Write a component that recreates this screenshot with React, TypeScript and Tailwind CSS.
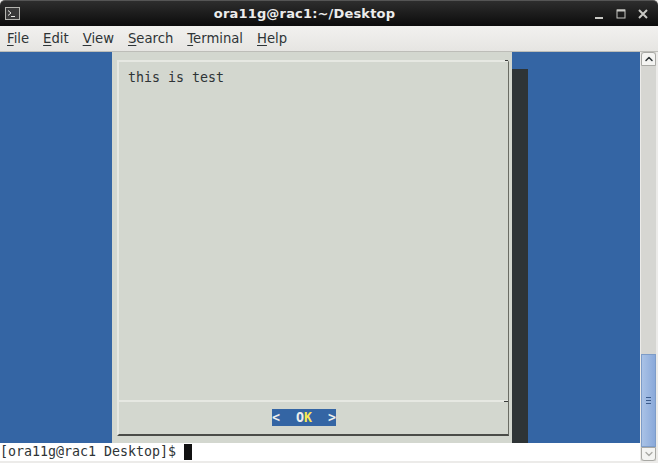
import { ChevronUp, ChevronDown } from "lucide-react";

const menus = [
  { key: "F", rest: "ile" },
  { key: "E", rest: "dit" },
  { key: "V", rest: "iew" },
  { key: "S", rest: "earch" },
  { key: "T", rest: "erminal" },
  { key: "H", rest: "elp" },
];

export default function App() {
  return (
    <div className="flex h-[463px] w-[658px] flex-col overflow-hidden bg-[#ecebe9]">
      {/* Title bar */}
      <div className="flex h-[26px] shrink-0 items-center rounded-t-[5px] border-t border-[#555] bg-gradient-to-b from-[#2e2e2e] to-[#0c0c0c] pl-[5px] pr-[10px]">
        <svg width="15" height="13" viewBox="0 0 15 13" className="shrink-0">
          <rect x="0.5" y="0.5" width="14" height="12" fill="#3a3a3a" stroke="#b5b5b0" />
          <path d="M3 3.5 L6 6 L3 8.5" fill="none" stroke="#e8e8e4" strokeWidth="1" />
          <path d="M6 9.5 H10" stroke="#e8e8e4" strokeWidth="1" />
        </svg>
        <div className="mr-[5px] flex-1 text-center font-['DejaVu_Sans',sans-serif] text-[13px] font-bold tracking-[0.17px] text-[#ececec]">
          ora11g@rac1:~/Desktop
        </div>
        <div className="flex items-center gap-[12px]">
          <svg width="10" height="12" viewBox="0 0 10 12">
            <path d="M1 10 H9" stroke="#c8c8c4" strokeWidth="2" />
          </svg>
          <svg width="10" height="12" viewBox="0 0 10 12">
            <rect x="1" y="2" width="8" height="8" fill="none" stroke="#c8c8c4" />
            <path d="M1 2.5 H9" stroke="#c8c8c4" strokeWidth="2" />
          </svg>
          <svg width="10" height="12" viewBox="0 0 10 12">
            <path d="M1 2 L9 10 M9 2 L1 10" stroke="#c8c8c4" strokeWidth="2" />
          </svg>
        </div>
      </div>

      {/* Menu bar */}
      <div className="flex h-[26px] shrink-0 items-center gap-[14px] border-b border-[#bdbdb8] bg-gradient-to-b from-[#f2f1ef] to-[#e6e5e2] pl-[7px] font-['DejaVu_Sans',sans-serif] text-[13.2px] text-[#2e3436]">
        {menus.map((m) => (
          <span key={m.key}>
            <span className="underline underline-offset-2">{m.key}</span>
            {m.rest}
          </span>
        ))}
      </div>

      <div className="mb-[2px] flex min-h-0 flex-1">
        {/* Terminal */}
        <div className="flex min-w-0 flex-1 flex-col bg-white">
          <div className="flex h-[391px] shrink-0 bg-[#3465a4]">
            <div className="w-[112px] shrink-0" />
            <div className="w-[400px] shrink-0 bg-[#d3d7cf] pb-[7px] pl-[5px] pr-[3px] pt-[8px]">
              <div className="relative flex h-full flex-col border-b-2 border-l-2 border-r border-t-2 border-b-[#4a4c48] border-l-[#e6e8e2] border-r-[#6a6c64] border-t-[#e6e8e2]">
                <div className="absolute -top-[2px] right-0 h-px w-[3px] bg-[#3a3c3a]" />
                <div className="flex-1 pl-[9px] pt-[7px] font-['DejaVu_Sans_Mono',monospace] text-[13.3px] leading-[17px] text-[#2e3436]">
                  this is test
                </div>
                <div className="relative flex h-[34px] shrink-0 items-center justify-center border-t-2 border-[#e6e8e2] pb-[1px] pr-[19px]">
                  <div className="absolute -top-[1px] right-0 h-px w-[4px] bg-[#3a3c3a]" />
                  <div className="whitespace-pre bg-[#3465a4] font-['DejaVu_Sans_Mono',monospace] text-[13.3px] font-bold leading-[17px] text-[#eeeeec]">
                    {"<  O"}
                    <span className="text-[#fce94f]">K</span>
                    {"  >"}
                  </div>
                </div>
              </div>
            </div>
            <div className="flex w-[16px] shrink-0 flex-col pt-[17px]">
              <div className="flex-1 bg-[#2e3436]" />
            </div>
            <div className="flex-1" />
          </div>
          <div className="flex h-[18px] items-center whitespace-pre font-['DejaVu_Sans_Mono',monospace] text-[13.3px] leading-[18px] text-[#2e3436]">
            <span>[ora11g@rac1 Desktop]$ </span>
            <span className="h-[16px] w-[8px] bg-[#111]" />
          </div>
        </div>

        {/* Scrollbar */}
        <div className="flex w-[18px] shrink-0 flex-col bg-[#ecebe9] pl-[1px] pr-[2px]">
          <div className="flex flex-1 flex-col bg-[#d6d6d2]">
            <div className="flex h-[14px] shrink-0 items-center justify-center rounded-t-[3px] border border-[#a8a8a4] bg-[#f4f4f2]">
              <ChevronUp size={12} strokeWidth={3} className="text-[#2e3436]" />
            </div>
            <div className="flex-1" />
            <div className="flex h-[93px] shrink-0 flex-col items-center justify-center gap-[2px] border border-[#7d9cc8] bg-gradient-to-r from-[#a9c2e6] to-[#8aa9da]">
              <div className="h-px w-[5px] bg-[#3c5c8c]" />
              <div className="h-px w-[5px] bg-[#3c5c8c]" />
              <div className="h-px w-[5px] bg-[#3c5c8c]" />
            </div>
            <div className="flex h-[14px] shrink-0 items-center justify-center rounded-b-[3px] border border-[#a8a8a4] bg-[#f4f4f2]">
              <ChevronDown size={12} strokeWidth={2.5} className="text-[#a8a8a4]" />
            </div>
          </div>
        </div>
      </div>
    </div>
  );
}
